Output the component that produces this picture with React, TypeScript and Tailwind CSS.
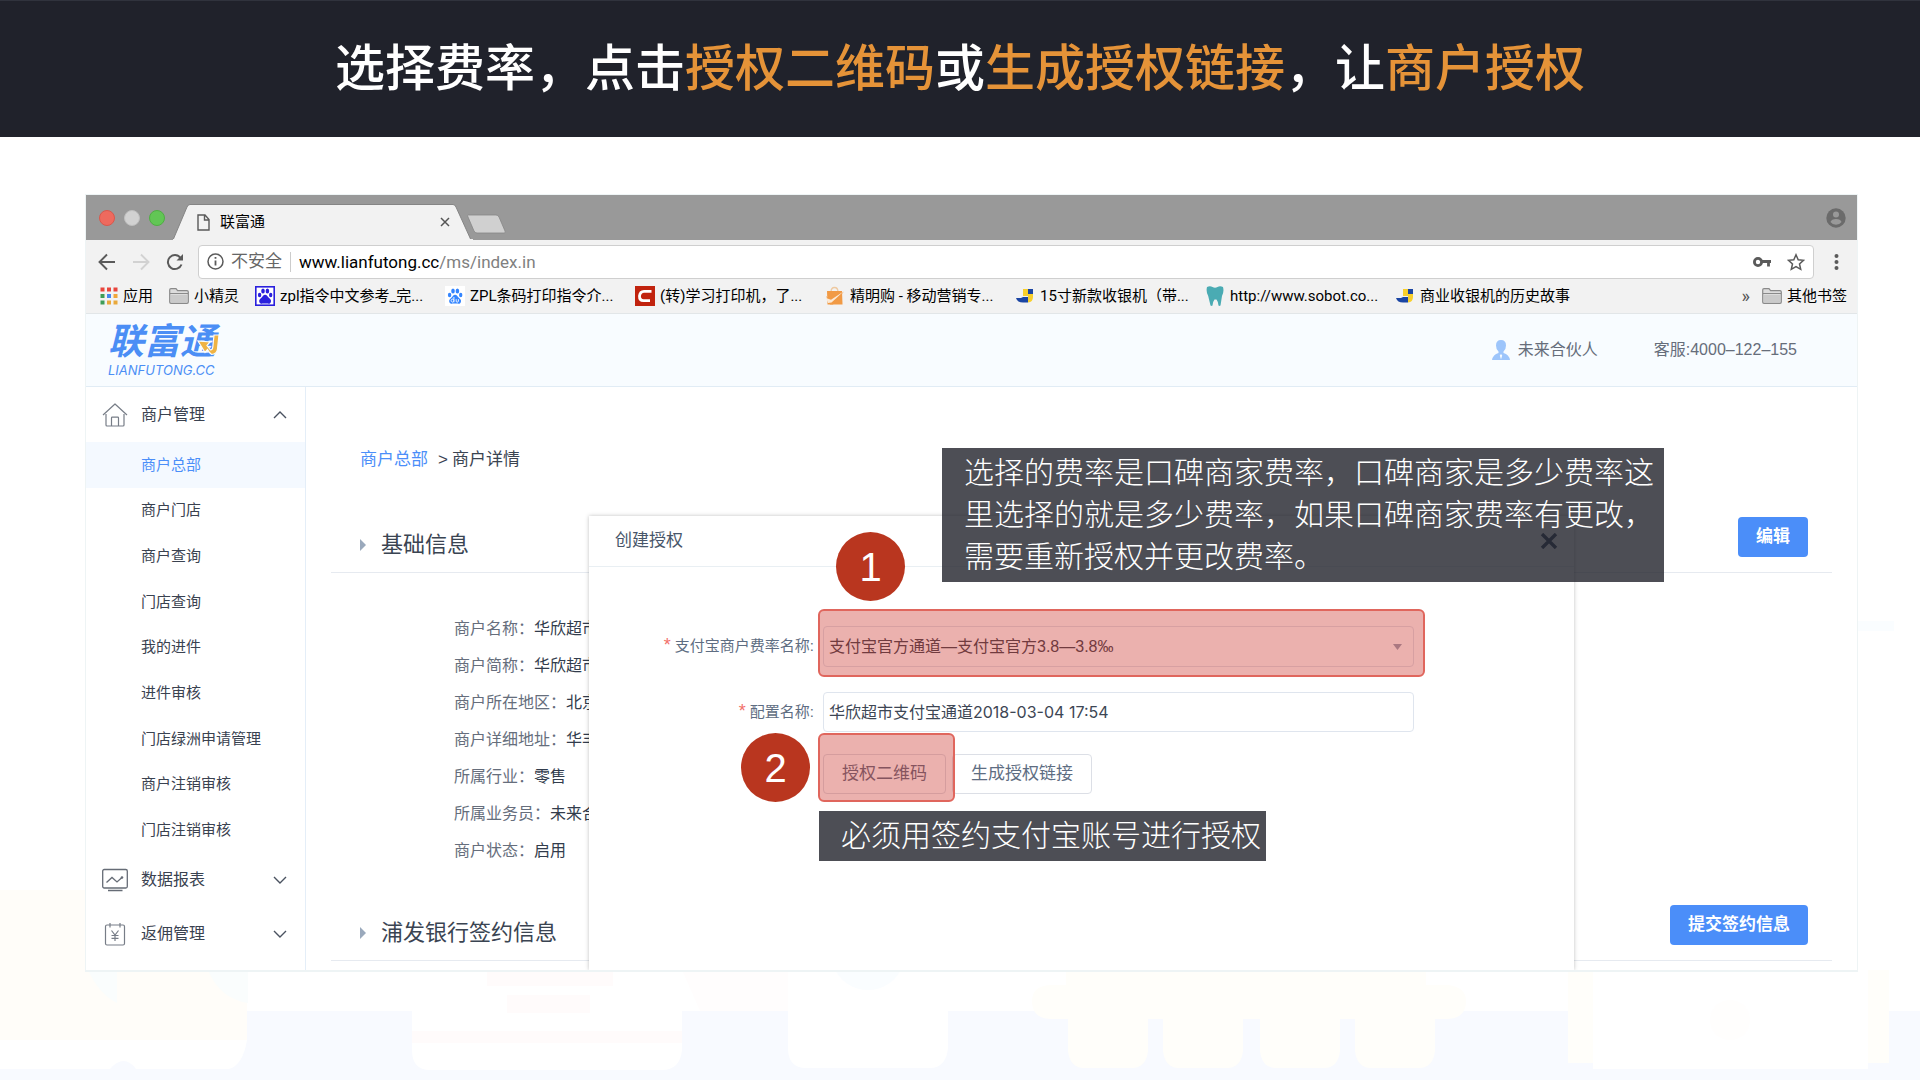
import type { ReactNode } from 'react';

const subMenu = ['商户总部', '商户门店', '商户查询', '门店查询', '我的进件', '进件审核', '门店绿洲申请管理', '商户注销审核', '门店注销审核'];

const details = [
    { label: '商户名称', value: '华欣超市' },
    { label: '商户简称', value: '华欣超市' },
    { label: '商户所在地区', value: '北京' },
    { label: '商户详细地址', value: '华丰' },
    { label: '所属行业', value: '零售' },
    { label: '所属业务员', value: '未来合伙人' },
    { label: '商户状态', value: '启用' },
];

/* ---------- icons ---------- */

function AppsIcon() {
    const colors = ['#e8453c', '#e8453c', '#e8453c', '#3f9d58', '#4688f1', '#f0a63a', '#3f9d58', '#e9a93c', '#e9a93c'];
    return (
        <svg width="18" height="18" viewBox="0 0 18 18" className="shrink-0">
            {colors.map((c, i) => (
                <rect key={i} x={(i % 3) * 6.5 + 0.5} y={Math.floor(i / 3) * 6.5 + 0.5} width="4" height="4" fill={c} />
            ))}
        </svg>
    );
}

function FolderIcon() {
    return (
        <svg width="20" height="16" viewBox="0 0 20 16" className="shrink-0">
            <path d="M.7 14V2Q.7.7 2 .7h5l1.6 2h9.4q1.3 0 1.3 1.3v10q0 1.3-1.3 1.3H2Q.7 15.3.7 14z" fill="#dcdcdc" stroke="#8a8a8a" strokeWidth="1.2" />
            <path d="M1 5.5h18" stroke="#8a8a8a" strokeWidth="1" />
            <path d="M2 7h16v7H2z" fill="#cacaca" />
        </svg>
    );
}

function PawIcon({ framed }: { framed?: boolean }) {
    const color = framed ? '#2a20dd' : '#3385ff';
    return (
        <svg width="20" height="20" viewBox="0 0 20 20" className="shrink-0">
            <rect x="0.8" y="0.8" width="18.4" height="18.4" fill="#fff" stroke={framed ? '#2a20dd' : '#fff'} strokeWidth="1.6" />
            <g fill={color}>
                <ellipse cx="4.6" cy="9" rx="1.7" ry="2.3" />
                <ellipse cx="8" cy="5" rx="1.8" ry="2.5" />
                <ellipse cx="12.4" cy="5" rx="1.8" ry="2.5" />
                <ellipse cx="15.7" cy="9" rx="1.7" ry="2.3" />
                <path d="M10.100 8.800c1.800 0 2.300 1.700 3.700 3 1.800 1.500 2.600 2.500 2.100 4.200-.5 1.900-2.200 1.900-3.600 1.600-1.500-.3-2.900-.3-4.400 0-1.400.3-3.100.2-3.600-1.600-.5-1.700.4-2.700 2.100-4.200 1.400-1.300 1.900-3 3.700-3z" />
            </g>
            {!framed && (
                <path d="M8.900 11v5.300M8.900 14.700a1.400 1.500 0 1 1-.01-.3M11.200 13.200v2q0 1 1 1t1.200-1v-2" fill="none" stroke="#fff" strokeWidth="0.9" />
            )}
        </svg>
    );
}

function CIcon() {
    return (
        <svg width="20" height="20" viewBox="0 0 20 20" className="shrink-0">
            <rect width="20" height="20" fill="#c1230e" />
            <path d="M16.500 5.300H9Q5 5.500 4.500 10q-.2 4.500 4 4.700H15" fill="none" stroke="#fff" strokeWidth="2.800" />
        </svg>
    );
}

function BagIcon() {
    return (
        <svg width="20" height="20" viewBox="0 0 20 20" className="shrink-0">
            <path d="M6 6Q6 1.500 9.500 1.500T13 6" fill="none" stroke="#eec9a0" strokeWidth="1.300" />
            <path d="M2 5h15l.5 13.500h-15z" fill="#f19a45" />
            <path d="M1 10l5 4.500L19 5.500 8 18.500H5z" fill="#f19a45" />
            <path d="M1 12l5 1.700L18.500 5.500 6.500 16.500 3 17z" fill="#fbe9d5" />
        </svg>
    );
}

function RegisterIcon() {
    return (
        <svg width="20" height="20" viewBox="0 0 20 20" className="shrink-0">
            <path d="M8 3h5v7H8z" fill="#f8cf2c" />
            <path d="M13 3h5v5h-5z" fill="#1b45a3" />
            <path d="M13 8h5v3q0 5-5 5.500z" fill="#f8cf2c" />
            <path d="M8 11h5v5.500H8q-5.500 0-7-4.500h5z" fill="#1b45a3" />
        </svg>
    );
}

function ToothIcon() {
    return (
        <svg width="20" height="20" viewBox="0 0 20 20" className="shrink-0">
            <path d="M2 1Q5-.5 7.500 1q2.500 1.500 5 0 2.500-1.500 5.500 0 1.300 4.500-1 9L15.500 19.500q-1.200.8-2 0-.6-4.500-2-6h-2q-1.400 1.500-2 6-.8.8-2 0L3.200 10Q.8 5.500 2 1z" fill="#4aabb3" />
        </svg>
    );
}

function Chevron({ up }: { up?: boolean }) {
    return (
        <svg width="14" height="8" viewBox="0 0 14 8" fill="none" stroke="#4a5260" strokeWidth="1.4">
            <path d={up ? 'M1 7l6-6 6 6' : 'M1 1l6 6 6-6'} />
        </svg>
    );
}

function HomeIcon() {
    return (
        <svg width="26" height="26" viewBox="0 0 26 26" fill="none" stroke="#777d87" strokeWidth="1.2" strokeLinejoin="round">
            <path d="M1 13L13 2l12 11" />
            <path d="M4 12v11q0 1 1 1h16q1 0 1-1V12" />
            <path d="M9.500 24v-8q0-.8.8-.8h5.400q.8 0 .8.8v8" />
        </svg>
    );
}

function ReportIcon() {
    return (
        <svg width="26" height="26" viewBox="0 0 26 26" fill="none" stroke="#666c76" strokeWidth="1.3">
            <rect x="0.7" y="2.5" width="24.6" height="18.5" rx="1.5" />
            <path d="M4.500 15.500l5.500-5 5 4.500 5-4.500M6 23.500h14.500" />
            <circle cx="20" cy="10.5" r="1.3" fill="#666c76" stroke="none" />
        </svg>
    );
}

function RebateIcon() {
    return (
        <svg width="26" height="26" viewBox="0 0 26 26" fill="none" stroke="#777d87" strokeWidth="1.2">
            <path d="M8 4h10M8 4H5Q3.500 4 3.500 5.500v17Q3.500 24 5 24h16q1.500 0 1.500-1.500v-17Q22.500 4 21 4h-3M8 2v4.500M18 2v4.500" />
            <path d="M9.500 9.500l3.500 4.500 3.500-4.500M13 14v6M9.500 14.500h7M9.500 17.300h7" />
        </svg>
    );
}

// faint shop-counter illustration behind the whole page
function Backdrop() {
    return (
        <svg className="absolute inset-x-0 bottom-0 w-full" viewBox="0 0 1920 480" aria-hidden="true">
            <path d="M1856 21h38v10h-38z" fill="#fafdff" />
            <path d="M0 411h1920v69H0z" fill="#f8faff" />
            <path d="M0 290h247v150H0z" fill="#fffdf9" />
            <path d="M88 370h29v33q-18-9-29-33zM208 370h40v33q-28-4-40-33z" fill="#fafdfd" />
            <path d="M0 440h247q-4 25-18 29h-93q-12-16-26 0H0z" fill="#fff" />
            <path d="M682 370h106v41H700z" fill="#fffdfd" />
            <path d="M412 370h270v80q-2 20-20 20H430q-18 0-18-20z" fill="#fff" />
            <path d="M487 370h126v16H487zM507 395h83v18h-83zM412 431h270v12H412z" fill="#fffbfb" />
            <path d="M788 370h160v78q-2 20-18 20H806q-18 0-18-20z" fill="#fff" />
            <path d="M835 370h66q-12 20-33 20t-33-20z" fill="#fafdff" />
            <path d="M1066 370h360v15h22q18 2 18 16 0 18-20 18h-394q-20 0-20-18 0-15 18-16h16z" fill="#fffefa" />
            <g fill="#fffefa">
                <path d="M1068 419h80v32q-2 17-16 17h-48q-14 0-16-17z" />
                <path d="M1163 419h80v32q-2 17-16 17h-48q-14 0-16-17z" />
                <path d="M1260 419h80v32q-2 17-16 17h-48q-14 0-16-17z" />
                <path d="M1355 419h80v32q-2 17-16 17h-48q-14 0-16-17z" />
            </g>
            <path d="M1568 370h321v93h-321z" fill="#fffefa" />
            <path d="M1593 370h275v99h-275z" fill="#fff" />
            <ellipse cx="1730" cy="420" rx="20" ry="20" fill="#fffefd" />
        </svg>
    );
}

/* ---------- browser chrome ---------- */

function TabStrip() {
    return (
        <div className="flex h-[45px] items-center bg-[#999] pl-[13px] pr-[11px]">
            <div className="flex gap-[9px]">
                <span className="size-4 rounded-full border border-[#d9574c] bg-[#ee6a5e]" />
                <span className="size-4 rounded-full border border-[#bfbfbf] bg-[#d1d1d1]" />
                <span className="size-4 rounded-full border border-[#4fae43] bg-[#62c655]" />
            </div>
            <div className="relative ml-2 flex h-9 w-[300px] items-center self-end pl-6 pr-[23px]">
                <svg className="absolute inset-0 size-full" viewBox="0 0 300 36" preserveAspectRatio="none">
                    <path d="M0 36L14 3q1-2.500 3-2.500h263q2 0 3 2.500l15 33z" fill="#f2f2f2" stroke="#858585" strokeWidth="1" />
                    <path d="M0 36h300" stroke="#f2f2f2" strokeWidth="2" />
                </svg>
                <svg className="relative" width="13" height="17" viewBox="0 0 13 17" fill="none" stroke="#5a5a5a" strokeWidth="1.4">
                    <path d="M1 1h7l4 4.500V16H1zM7.500 1v5H12" />
                </svg>
                <span className="relative ml-[10px] flex-1 text-[15px] leading-5 text-black">联富通</span>
                <button type="button" aria-label="关闭标签页" className="relative">
                    <svg width="10" height="10" viewBox="0 0 10 10" stroke="#555" strokeWidth="1.5">
                        <path d="M1 1l8 8M9 1l-8 8" />
                    </svg>
                </button>
            </div>
            <svg className="-ml-2 mt-3" width="42" height="20" viewBox="0 0 42 20">
                <path d="M3 1h28q2 0 3 2l6 14q1 2-1 2H12q-2 0-3-2L3 3q-1-2 0-2z" fill="#d0d0d0" stroke="#868686" strokeWidth="0.8" />
            </svg>
            <svg className="ml-auto" width="20" height="20" viewBox="0 0 20 20">
                <circle cx="10" cy="10" r="9.7" fill="#6b6b6b" />
                <circle cx="10" cy="6.6" r="3" fill="#999" />
                <path d="M4.500 14q1-3 5.500-3t5.500 3q-2 2.800-5.500 2.800T4.500 14z" fill="#999" />
            </svg>
        </div>
    );
}

function Toolbar() {
    return (
        <div className="flex h-10 items-center bg-[#f2f2f2] pl-3 pr-[18px] pt-[3px]">
            <div className="flex items-center gap-4">
                <button type="button" aria-label="后退">
                    <svg width="18" height="18" viewBox="0 0 18 18" fill="none" stroke="#5a5a5a" strokeWidth="1.9">
                        <path d="M17 9H2M9 1.500L1.500 9 9 16.500" />
                    </svg>
                </button>
                <button type="button" aria-label="前进">
                    <svg width="18" height="18" viewBox="0 0 18 18" fill="none" stroke="#d2d2d2" strokeWidth="1.9">
                        <path d="M1 9h15M9 1.500L16.500 9 9 16.500" />
                    </svg>
                </button>
                <button type="button" aria-label="重新加载">
                    <svg width="18" height="18" viewBox="0 0 18 18" fill="none" stroke="#5a5a5a" strokeWidth="2">
                        <path d="M15.500 11.500A7 7 0 1 1 14.500 4.800" />
                        <path d="M17 1v6.500h-6.500z" fill="#5a5a5a" stroke="none" />
                    </svg>
                </button>
            </div>
            <div className="ml-[14px] flex h-[34px] flex-1 items-center rounded border border-[#cfcfcf] bg-white pl-2 pr-2">
                <svg width="17" height="17" viewBox="0 0 17 17" fill="none" stroke="#5a5a5a" strokeWidth="1.5">
                    <circle cx="8.5" cy="8.5" r="7.5" />
                    <path d="M8.500 7.500v5M8.500 4v1.800" strokeWidth="1.8" />
                </svg>
                <span className="ml-[7px] text-[17px] leading-6 text-[#666]">不安全</span>
                <span className="ml-2 mr-2 h-5 w-px bg-[#ccc]" />
                <span className="flex-1 font-[Roboto] text-[17px] leading-6 text-[#808080]">
                    <span className="text-black">www.lianfutong.cc</span>/ms/index.in
                </span>
                <svg width="18" height="12" viewBox="0 0 18 12" fill="none" stroke="#5a5a5a">
                    <circle cx="5" cy="6" r="3.6" strokeWidth="2.8" />
                    <path d="M9 5.500h9M15.500 5.500v5" strokeWidth="2.8" />
                </svg>
                <svg className="ml-4" width="18" height="18" viewBox="0 0 18 18" fill="none" stroke="#5a5a5a" strokeWidth="1.5">
                    <path d="M9 1.800l2.200 5 5.300.5-4 3.600 1.200 5.400L9 13.500l-4.700 2.800 1.200-5.400-4-3.600 5.300-.5z" />
                </svg>
            </div>
            <svg className="ml-5" width="5" height="18" viewBox="0 0 5 18" fill="#5a5a5a">
                <circle cx="2.5" cy="3" r="2" />
                <circle cx="2.5" cy="9" r="2" />
                <circle cx="2.5" cy="15" r="2" />
            </svg>
        </div>
    );
}

function Bookmark({ icon, children }: { icon: ReactNode; children: ReactNode }) {
    return (
        <a href="#" className="flex w-[190px] items-center gap-[5px] whitespace-nowrap">
            {icon}
            {children}
        </a>
    );
}

function BookmarkBar() {
    return (
        <div className="flex h-[34px] items-center border-b border-[#e2e6e8] bg-[#f2f2f2] pb-[2px] pl-[14px] pr-[10px] font-[Roboto,'Noto_Sans_CJK_SC',sans-serif] text-[15px] leading-5 text-black">
            <a href="#" className="flex items-center gap-[5px]">
                <AppsIcon />
                应用
            </a>
            <a href="#" className="ml-4 mr-4 flex items-center gap-[5px]">
                <FolderIcon />
                小精灵
            </a>
            <Bookmark icon={<PawIcon framed />}>zpl指令中文参考_完...</Bookmark>
            <Bookmark icon={<PawIcon />}>ZPL条码打印指令介...</Bookmark>
            <Bookmark icon={<CIcon />}>(转)学习打印机，了...</Bookmark>
            <Bookmark icon={<BagIcon />}>精明购 - 移动营销专...</Bookmark>
            <Bookmark icon={<RegisterIcon />}>15寸新款收银机（带...</Bookmark>
            <Bookmark icon={<ToothIcon />}>http://www.sobot.co...</Bookmark>
            <Bookmark icon={<RegisterIcon />}>商业收银机的历史故事</Bookmark>
            <span className="ml-auto text-lg text-[#555]">»</span>
            <a href="#" className="ml-3 flex items-center gap-[5px]">
                <FolderIcon />
                其他书签
            </a>
        </div>
    );
}

/* ---------- application ---------- */

function Logo() {
    return (
        <div className="relative text-[#4b8ef5]">
            <div className="text-4xl font-bold italic leading-10">联富通</div>
            <div className="font-[Inter] text-[13px] italic leading-4">LIANFUTONG.CC</div>
            <svg className="absolute -right-1 top-3" width="24" height="22" viewBox="0 0 24 22">
                <path d="M18 1h5l-1.500 14q-.5 5-6 5.500l-2-2-2-3-2.500 3L2 7l12 1-3 3.500 3.500 4.500q2 0 2.300-3z" fill="#efb344" stroke="#f8fcff" strokeWidth="1.2" />
            </svg>
        </div>
    );
}

function AppHeader() {
    return (
        <header className="flex h-[73px] items-center border-b border-[#e1ecf5] bg-[#f8fcff] pl-[22px] pr-[60px] text-base text-[#666d7a]">
            <Logo />
            <div className="ml-auto flex items-center gap-2">
                <svg width="18" height="20" viewBox="0 0 18 20" fill="#9dc5fb">
                    <path d="M9 0q5 0 5 5.500 0 4-2.500 6v1.500q5.500 1.500 6.500 7H0q1-5.500 6.500-7v-1.500Q4 9.500 4 5.500 4 0 9 0z" />
                    <path d="M9 14l1.200 1.500L9 19.500l-1.200-4z" fill="#f8fcff" />
                </svg>
                未来合伙人
            </div>
            <div className="ml-14">客服:4000–122–155</div>
        </header>
    );
}

function MenuGroup({ icon, label, open }: { icon: ReactNode; label: string; open?: boolean }) {
    return (
        <button type="button" aria-expanded={!!open} className="flex h-[54px] w-full items-center pl-4 pr-[18px] text-base text-[#3a4250]">
            {icon}
            <span className="ml-[13px] flex-1 text-left">{label}</span>
            <Chevron up={open} />
        </button>
    );
}

function Sidebar() {
    return (
        <nav className="w-[220px] shrink-0 border-r border-[#e4eef8] pb-[9px] pt-px">
            <MenuGroup icon={<HomeIcon />} label="商户管理" open />
            <ul className="grid h-[411px] grid-rows-9 text-[15px] text-[#3a4250]">
                {subMenu.map((item, i) => (
                    <li key={item} className={i === 0 ? 'bg-[#f4f9ff] text-[#4b8ef9]' : ''}>
                        <a href="#" className="flex h-full items-center pl-[55px]">{item}</a>
                    </li>
                ))}
            </ul>
            <MenuGroup icon={<ReportIcon />} label="数据报表" />
            <MenuGroup icon={<RebateIcon />} label="返佣管理" />
        </nav>
    );
}

function SectionHeader({ title, action }: { title: string; action: string }) {
    return (
        <div className="mx-[25px] flex h-14 items-center border-b border-[#e6eaf0] pl-[29px] pr-6">
            <svg width="6" height="12" viewBox="0 0 6 12">
                <path d="M0 0l6 6-6 6z" fill="#9aa9bc" />
            </svg>
            <h2 className="ml-[15px] flex-1 text-[22px] leading-8 text-[#3a4452]">{title}</h2>
            <button type="button" className="h-10 self-start rounded-sm bg-[#4b8ef9] px-[18px] text-[17px] font-bold text-white">
                {action}
            </button>
        </div>
    );
}

function Highlight({ className }: { className: string }) {
    return <div className={`pointer-events-none absolute rounded-md border-2 border-[#e0665d] bg-[#c92c24]/37 ${className}`} />;
}

function StepBadge({ n, className }: { n: number; className: string }) {
    return (
        <div className={`absolute flex size-[69px] items-center justify-center rounded-full bg-[#b9361f] text-[40px] leading-none text-white ${className}`}>
            {n}
        </div>
    );
}

function FieldLabel({ htmlFor, children }: { htmlFor: string; children: string }) {
    return (
        <label htmlFor={htmlFor} className="w-[225px] shrink-0 text-right text-[15px] text-[#5e6d82]">
            <span className="text-lg leading-5 text-[#f2706a]">*</span> {children}:
        </label>
    );
}

function AuthDialog() {
    return (
        <section role="dialog" aria-labelledby="dialog-title" className="absolute inset-x-[283px] bottom-0 top-[129px] bg-white shadow-[0_0_4px_rgba(0,0,0,0.25)]">
            <div className="flex h-[51px] items-center border-b border-[#e9eff3] pl-[26px] pr-4">
                <h3 id="dialog-title" className="flex-1 text-[17px] text-[#48566a]">创建授权</h3>
                <button type="button" aria-label="关闭">
                    <svg width="18" height="16" viewBox="0 0 18 16" stroke="#3c4a63" strokeWidth="3.4">
                        <path d="M2 1l14 14M16 1L2 15" />
                    </svg>
                </button>
            </div>

            <form className="pr-40 pt-[59px]">
                <div className="flex items-center gap-[9px]">
                    <FieldLabel htmlFor="rate">支付宝商户费率名称</FieldLabel>
                    <div className="relative flex-1">
                        <select id="rate" className="h-[41px] w-full appearance-none rounded-sm border border-[#dfe4ec] bg-white px-[5px] text-base text-[#3d4450]">
                            <option>支付宝官方通道—支付宝官方3.8—3.8‰</option>
                        </select>
                        <svg className="absolute right-3 top-[18px]" width="9" height="6" viewBox="0 0 9 6">
                            <path d="M0 0h9L4.500 6z" fill="#9aa5b8" />
                        </svg>
                        <Highlight className="-bottom-[10px] -left-[5px] -right-[11px] -top-[17px]" />
                        <StepBadge n={1} className="-top-[94px] left-[13px]" />
                    </div>
                </div>

                <div className="mt-[25px] flex items-center gap-[9px]">
                    <FieldLabel htmlFor="config">配置名称</FieldLabel>
                    <input
                        id="config"
                        type="text"
                        defaultValue="华欣超市支付宝通道2018-03-04 17:54"
                        className="h-10 flex-1 rounded-sm border border-[#dfe5ee] px-[5px] pb-[3px] font-[Inter,'Noto_Sans_CJK_SC',sans-serif] text-base text-[#3d4654]"
                    />
                </div>

                <div className="relative ml-[234px] mt-[22px] flex gap-[6px] text-[17px] text-[#5e6d82]">
                    <div className="relative">
                        <button type="button" className="h-10 rounded-sm border border-[#dcdfe6] px-[18px]">授权二维码</button>
                        <Highlight className="-bottom-[8px] -left-[5px] -right-[9px] -top-[21px] z-10" />
                        <StepBadge n={2} className="-left-[82px] -top-[21px]" />
                    </div>
                    <button type="button" className="h-10 rounded-sm border border-[#dcdfe6] px-[18px]">生成授权链接</button>
                    <p className="absolute -left-1 top-[57px] bg-[#20222b]/80 py-1 pl-[22px] pr-[5px] text-[30px] font-light leading-[42px] whitespace-nowrap text-white">
                        必须用签约支付宝账号进行授权
                    </p>
                </div>
            </form>
        </section>
    );
}

function Content() {
    return (
        <main className="relative flex-1 overflow-hidden">
            <div className="mb-11 flex h-[86px] items-end pl-[54px] text-[17px] leading-[26px] text-[#3a4452]">
                <a href="#" className="text-[#4b8ef9]">商户总部</a>
                <span className="ml-[10px] mr-1">&gt;</span>
                商户详情
            </div>
            <SectionHeader title="基础信息" action="编辑" />
            <dl className="mb-9 mt-[37px] pl-[148px] text-base leading-[37px]">
                {details.map((d) => (
                    <div key={d.label} className="flex">
                        <dt className="text-[#666e7c]">{d.label}：</dt>
                        <dd className="text-[#323c4c]">{d.value}</dd>
                    </div>
                ))}
            </dl>
            <SectionHeader title="浦发银行签约信息" action="提交签约信息" />

            <AuthDialog />
            <p className="absolute left-[636px] top-[61px] w-[722px] bg-[#20222b]/80 py-1 pl-[22px] pr-2 text-[30px] font-light leading-[42px] text-white">
                选择的费率是口碑商家费率，口碑商家是多少费率这里选择的就是多少费率，如果口碑商家费率有更改，需要重新授权并更改费率。
            </p>
        </main>
    );
}

export default function App() {
    return (
        <div lang="zh-CN" className="relative min-h-screen bg-white font-['Liberation_Sans','Noto_Sans_CJK_SC',sans-serif]">
            <Backdrop />
            <div className="flex h-[137px] items-center justify-center border-t border-[#30333d] bg-[#20222b]">
                <h1 className="text-[50px] font-medium leading-[70px] text-white">
                    选择费率，点击<span className="text-[#e59338]">授权二维码</span>或<span className="text-[#e59338]">生成授权链接</span>，让<span className="text-[#e59338]">商户授权</span>
                </h1>
            </div>
            <div className="relative ml-[85px] mr-[62px] mt-[57px] border border-b-2 border-[#eef4f5] bg-white">
                <TabStrip />
                <Toolbar />
                <BookmarkBar />
                <AppHeader />
                <div className="flex">
                    <Sidebar />
                    <Content />
                </div>
            </div>
        </div>
    );
}
